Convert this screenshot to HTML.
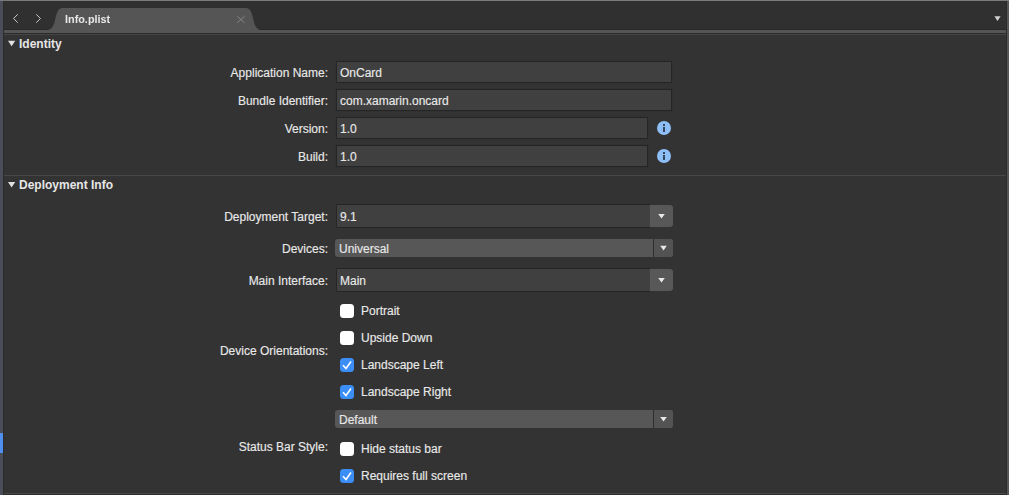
<!DOCTYPE html>
<html><head><meta charset="utf-8">
<style>
*{margin:0;padding:0;box-sizing:border-box}
html,body{width:1009px;height:495px;overflow:hidden;background:#333333}
body{position:relative;font-family:"Liberation Sans",sans-serif;font-size:12px;color:#e8e8e8}
.lbl,.txt{-webkit-text-stroke:0.15px #e8e8e8}
.a{position:absolute}
.lbl{position:absolute;right:681px;white-space:nowrap;line-height:14px}
.txt{position:absolute;white-space:nowrap;line-height:14px}
.fld{position:absolute;left:336px;height:22px;background:#404040;border:1px solid #252525;box-shadow:0 0 1px #2a2a2a}
.dd{position:absolute;left:336px;width:314px;height:24px;background:#404040;border-top:1px solid #242424;border-left:1px solid #262626;border-bottom:1px solid #252525}
.dd .btn{position:absolute;left:313px;top:0;height:22px;width:23px;background:#585858;border-radius:0 3px 3px 0}
.pop{position:absolute;left:335px;width:338px;height:18px;background:#575757;border-radius:3px}
.pop .sep{position:absolute;left:318px;top:0;bottom:0;width:1px;background:#2e2e2e}
.pop .btn2{position:absolute;left:319px;top:0;bottom:0;right:0;background:#535353;border-radius:0 3px 3px 0}
.tri{position:absolute;width:0;height:0;border-left:3.5px solid transparent;border-right:3.5px solid transparent;border-top:4.5px solid #e8e8e8}
.cb{position:absolute;left:340px;width:14px;height:14px;border-radius:3.5px;background:#ffffff}
.cb.on{background:#3b8ef5}
.hdr{position:absolute;left:19px;font-weight:bold;font-size:12px;color:#e6e6e6;line-height:14px}
.htri{position:absolute;left:8px;width:0;height:0;border-left:4px solid transparent;border-right:4px solid transparent;border-top:6px solid #e0e0e0}
.info{position:absolute;left:657px;width:14px;height:14px;border-radius:50%;background:#8ec0f7}
.info:before{content:"";position:absolute;left:6px;top:3px;width:2px;height:2px;background:#33465e}
.info:after{content:"";position:absolute;left:6px;top:6px;width:2px;height:5px;background:#33465e}
</style></head>
<body>
<!-- borders -->
<div class="a" style="left:0;top:0;width:1009px;height:1px;background:#7a7a7a"></div>
<div class="a" style="left:0;top:1px;width:3px;height:494px;background:#4a4e58"></div>
<div class="a" style="left:3px;top:1px;width:1px;height:494px;background:#2b2b2b"></div>
<div class="a" style="left:1007px;top:1px;width:2px;height:494px;background:#555555"></div>
<div class="a" style="left:1006px;top:1px;width:1px;height:494px;background:#2b2b2b"></div>
<div class="a" style="left:0;top:433px;width:3px;height:20px;background:#4f8ff0"></div>
<!-- tab bar -->
<div class="a" style="left:4px;top:1px;width:1002px;height:28px;background:#303030"></div>
<div class="a" style="left:4px;top:29px;width:1002px;height:1px;background:#282828"></div>
<div class="a" style="left:4px;top:30px;width:1002px;height:3px;background:#555555"></div>
<div class="a" style="left:4px;top:33px;width:1002px;height:1px;background:#2a2a2a"></div>
<div class="a" style="left:4px;top:34px;width:1002px;height:1px;background:#464646"></div>
<svg class="a" style="left:0;top:0" width="1009" height="35">
  <path d="M46.5 30 C52.5 30 54 25 55.5 18 C57 12 58.5 8 62.5 8 L246 8 C250 8 251.5 12 253 18 C254.5 25 256 30 262 30 Z" fill="#555555"/>
  <path d="M17.8 14.3 L13.5 18.5 L17.8 22.7" fill="none" stroke="#d0d0d0" stroke-width="0.95"/>
  <path d="M36.2 14.3 L40.5 18.5 L36.2 22.7" fill="none" stroke="#d0d0d0" stroke-width="0.95"/>
  <path d="M237.3 16.3 L244.5 22.8 M244.5 16.3 L237.3 22.8" fill="none" stroke="#868686" stroke-width="1"/>
  <path d="M994.4 16.3 L1000.6 16.3 L997.5 21 Z" fill="#d0d0d0"/>
</svg>
<div class="txt" style="left:65px;top:12px;font-weight:bold;font-size:10.85px;color:#e8e8e8;will-change:transform;-webkit-text-stroke:0">Info.plist</div>

<!-- Identity -->
<svg class="a" style="left:0;top:0" width="20" height="60"><path d="M8 40.8 L15.2 40.8 L11.6 46.2 Z" fill="#e0e0e0"/></svg>
<div class="hdr" style="top:37px">Identity</div>

<div class="lbl" style="top:66px">Application Name:</div>
<div class="fld" style="top:61px;width:336px"></div>
<div class="txt" style="left:340px;top:66px">OnCard</div>

<div class="lbl" style="top:94px">Bundle Identifier:</div>
<div class="fld" style="top:89px;width:336px"></div>
<div class="txt" style="left:340px;top:94px">com.xamarin.oncard</div>

<div class="lbl" style="top:122px">Version:</div>
<div class="fld" style="top:117px;width:312px"></div>
<div class="txt" style="left:340px;top:122px">1.0</div>
<div class="info" style="top:121px"></div>

<div class="lbl" style="top:150px">Build:</div>
<div class="fld" style="top:145px;width:312px"></div>
<div class="txt" style="left:340px;top:150px">1.0</div>
<div class="info" style="top:149px"></div>

<div class="a" style="left:4px;top:175px;width:1002px;height:1px;background:#474747"></div>

<!-- Deployment -->
<svg class="a" style="left:0;top:170px" width="20" height="30"><path d="M8 12 L15.2 12 L11.6 17.4 Z" fill="#e0e0e0"/></svg>
<div class="hdr" style="top:178px">Deployment Info</div>

<div class="lbl" style="top:210px">Deployment Target:</div>
<div class="dd" style="top:204px"><div class="btn"></div></div>
<div class="txt" style="left:340px;top:210px">9.1</div>

<div class="lbl" style="top:242px">Devices:</div>
<div class="pop" style="top:239px"><div class="sep"></div><div class="btn2"></div></div>
<div class="txt" style="left:339px;top:242px">Universal</div>

<div class="lbl" style="top:274px">Main Interface:</div>
<div class="dd" style="top:268px"><div class="btn"></div></div>
<div class="txt" style="left:340px;top:274px">Main</div>

<div class="cb" style="top:304px"></div>
<div class="txt" style="left:361px;top:304px">Portrait</div>
<div class="cb" style="top:331px"></div>
<div class="txt" style="left:361px;top:331px">Upside Down</div>
<div class="lbl" style="top:344px">Device Orientations:</div>
<div class="cb on" style="top:358px"><svg width="14" height="14" style="position:absolute;left:0;top:0"><path d="M3 7.2 L6 10.5 L11 3.5" fill="none" stroke="#fff" stroke-width="1.5"/></svg></div>
<div class="txt" style="left:361px;top:358px">Landscape Left</div>
<div class="cb on" style="top:385px"><svg width="14" height="14" style="position:absolute;left:0;top:0"><path d="M3 7.2 L6 10.5 L11 3.5" fill="none" stroke="#fff" stroke-width="1.5"/></svg></div>
<div class="txt" style="left:361px;top:385px">Landscape Right</div>

<div class="pop" style="top:410px"><div class="sep"></div><div class="btn2"></div></div>
<div class="txt" style="left:339px;top:413px">Default</div>

<div class="lbl" style="top:440px">Status Bar Style:</div>
<div class="cb" style="top:442px"></div>
<div class="txt" style="left:361px;top:442px">Hide status bar</div>
<div class="cb on" style="top:469px"><svg width="14" height="14" style="position:absolute;left:0;top:0"><path d="M3 7.2 L6 10.5 L11 3.5" fill="none" stroke="#fff" stroke-width="1.5"/></svg></div>
<div class="txt" style="left:361px;top:469px">Requires full screen</div>

<svg class="a" style="left:0;top:0" width="1009" height="495">
<path d="M658.2 214 L664.8 214 L661.5 218.6 Z" fill="#e8e8e8"/>
<path d="M658.2 278 L664.8 278 L661.5 282.6 Z" fill="#e8e8e8"/>
<path d="M660.2 245.8 L666.8 245.8 L663.5 250.4 Z" fill="#e8e8e8"/>
<path d="M660.2 416.9 L666.8 416.9 L663.5 421.5 Z" fill="#e8e8e8"/>
</svg>
<div class="a" style="left:4px;top:493px;width:1002px;height:1px;background:#484848"></div>
<div class="a" style="left:4px;top:494px;width:1002px;height:1px;background:#2b2b2b"></div>
</body></html>
